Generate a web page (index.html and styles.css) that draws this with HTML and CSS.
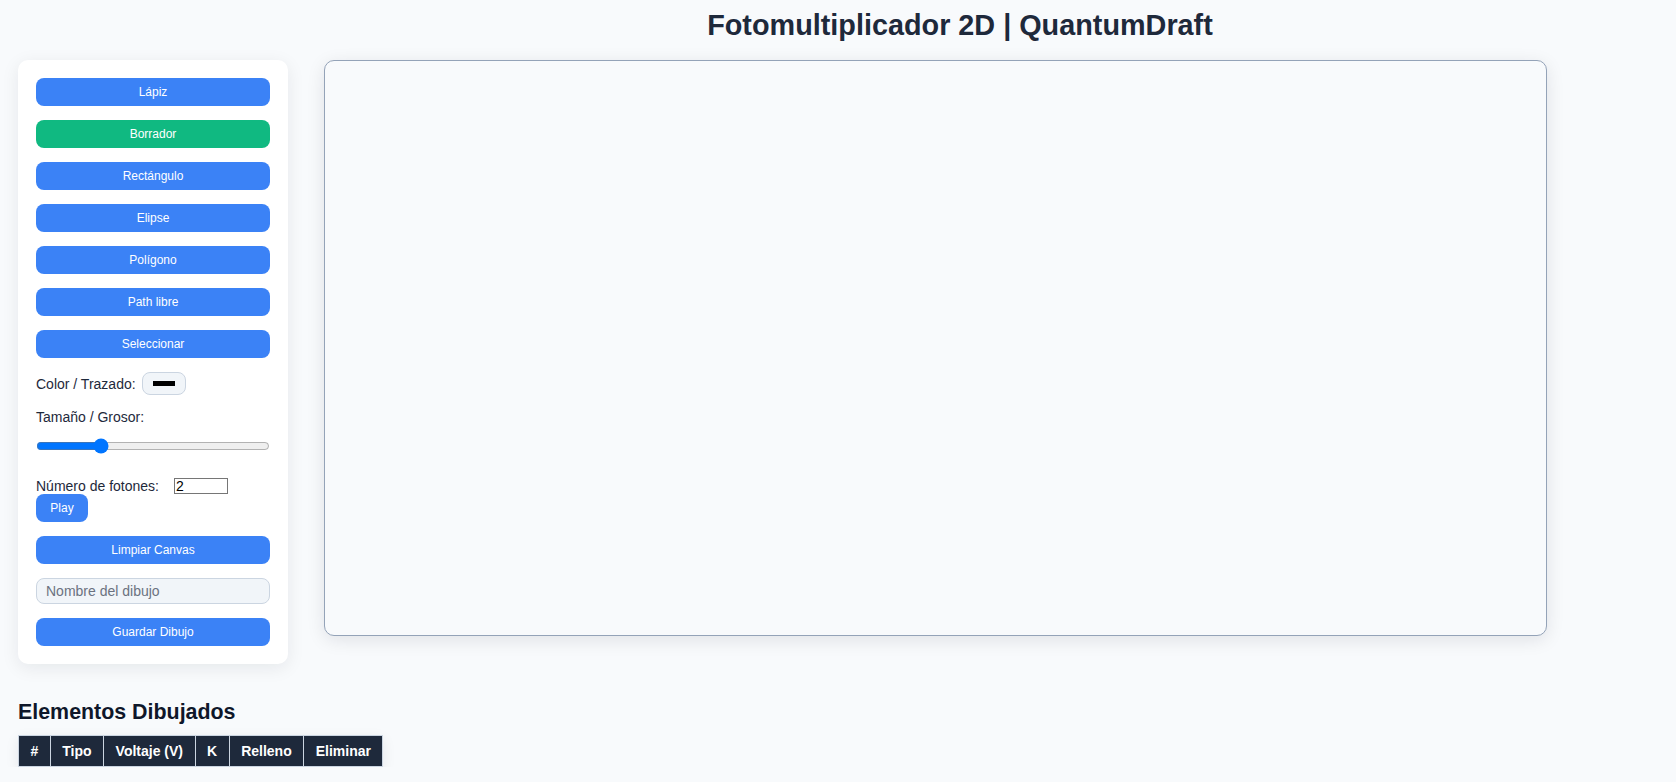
FILE: index.html
```html
<!DOCTYPE html>
<html lang="es">
<head>
<meta charset="utf-8">
<title>Fotomultiplicador 2D | QuantumDraft</title>
<link rel="stylesheet" href="styles.css">
</head>
<body>
<h1 class="title">Fotomultiplicador 2D | QuantumDraft</h1>
<div class="workspace">
  <aside class="panel">
    <button class="btn">Lápiz</button>
    <button class="btn btn-active">Borrador</button>
    <button class="btn">Rectángulo</button>
    <button class="btn">Elipse</button>
    <button class="btn">Polígono</button>
    <button class="btn">Path libre</button>
    <button class="btn">Seleccionar</button>
    <div class="color-row">
      <span class="label">Color / Trazado:</span>
      <span class="color-box"><span class="swatch"></span></span>
    </div>
    <div class="label">Tamaño / Grosor:</div>
    <input class="range" type="range" min="1" max="20" value="6">
    <div class="photons">
      <div class="photon-row">
        <span class="label">Número de fotones:</span>
        <span class="num-input">2</span>
      </div>
      <button class="btn btn-small">Play</button>
    </div>
    <button class="btn">Limpiar Canvas</button>
    <input class="name-input" type="text" placeholder="Nombre del dibujo">
    <button class="btn">Guardar Dibujo</button>
  </aside>
  <div class="canvas"></div>
</div>
<h2 class="subtitle">Elementos Dibujados</h2>
<table class="elements">
  <thead>
    <tr>
      <th>#</th>
      <th>Tipo</th>
      <th>Voltaje (V)</th>
      <th>K</th>
      <th>Relleno</th>
      <th>Eliminar</th>
    </tr>
  </thead>
</table>
</body>
</html>
```

FILE: styles.css
```css
* { box-sizing: border-box; }

body {
  margin: 0;
  background: #f8fafc;
  font-family: "Liberation Sans", Arial, sans-serif;
  color: #1e293b;
}

.title {
  margin: 9px 0 18px;
  padding-left: 244px;
  text-align: center;
  font-size: 28.8px;
  font-weight: bold;
  line-height: 33px;
  color: #1e293b;
}

.workspace {
  display: flex;
  align-items: flex-start;
  gap: 36px;
  padding-left: 18px;
}

.panel {
  width: 270px;
  padding: 18px;
  background: #ffffff;
  border-radius: 10px;
  box-shadow: 0 4px 18px rgba(15, 23, 42, 0.08);
  display: flex;
  flex-direction: column;
  gap: 14px;
}

.btn {
  display: block;
  width: 100%;
  height: 28px;
  border: none;
  border-radius: 8px;
  background: #3b82f6;
  color: #ffffff;
  font-family: "Liberation Sans", Arial, sans-serif;
  font-size: 12px;
  padding: 0;
  cursor: pointer;
}

.btn-active { background: #10b981; }

.btn-small {
  width: 52px;
}

.label {
  font-size: 14px;
  line-height: 16px;
  color: #1e293b;
}

.color-row {
  display: flex;
  align-items: center;
  gap: 6px;
  height: 23px;
}

.color-box {
  width: 44px;
  height: 23px;
  border: 1px solid #cbd5e1;
  border-radius: 8px;
  background: #f1f5f9;
  display: flex;
  align-items: center;
  justify-content: center;
}

.swatch {
  width: 22px;
  height: 5px;
  background: #000000;
}

.range {
  width: 100%;
  height: 14px;
  margin: 0 0 11px 0;
}

.photons {
  display: flex;
  flex-direction: column;
  align-items: flex-start;
}

.photon-row {
  display: flex;
  align-items: center;
  height: 16px;
}

.num-input {
  margin-left: 15px;
  width: 54px;
  height: 16px;
  border: 1px solid #767676;
  background: #ffffff;
  font-size: 14px;
  line-height: 14px;
  padding: 0 1px;
  color: #000000;
}

.name-input {
  width: 100%;
  height: 26px;
  border: 1px solid #cbd5e1;
  border-radius: 8px;
  background: #f1f5f9;
  padding: 0 9px;
  font-family: "Liberation Sans", Arial, sans-serif;
  font-size: 14px;
  color: #1e293b;
}

.name-input::placeholder { color: #6b7280; }

.canvas {
  width: 1223px;
  height: 576px;
  border: 1px solid #94a3b8;
  border-radius: 10px;
  background: #f8fafc;
  box-shadow: 0 4px 18px rgba(15, 23, 42, 0.1);
}

.subtitle {
  margin: 36px 0 10px 18px;
  font-size: 21.4px;
  line-height: 25px;
  font-weight: bold;
  color: #0f172a;
}

.elements {
  margin-left: 18px;
  border-collapse: collapse;
  box-shadow: 0 4px 14px rgba(15, 23, 42, 0.08);
}

.elements th {
  background: #1e293b;
  color: #ffffff;
  font-size: 14px;
  font-weight: bold;
  line-height: 16px;
  padding: 7px 11.5px;
  border: 1px solid #cbd5e1;
}
```
